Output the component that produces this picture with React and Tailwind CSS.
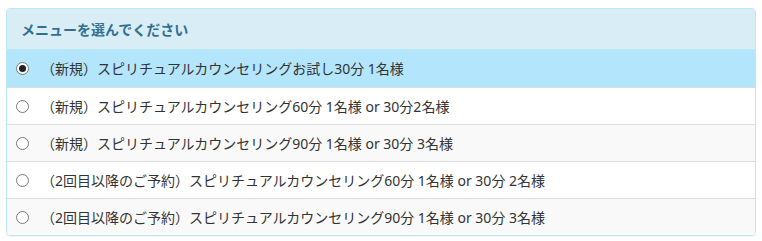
import React, { useState } from 'react';

const MENUS = [
  '（新規）スピリチュアルカウンセリングお試し30分 1名様',
  '（新規）スピリチュアルカウンセリング60分 1名様 or 30分2名様',
  '（新規）スピリチュアルカウンセリング90分 1名様 or 30分 3名様',
  '（2回目以降のご予約）スピリチュアルカウンセリング60分 1名様 or 30分 2名様',
  '（2回目以降のご予約）スピリチュアルカウンセリング90分 1名様 or 30分 3名様',
];

const Radio = ({ checked }) => (
  <span className="flex items-center justify-center w-[13px] h-[13px] rounded-full border border-[#7a7a7a] bg-white shrink-0">
    {checked && <span className="w-[7px] h-[7px] rounded-full bg-[#222]" />}
  </span>
);

export default function App() {
  const [selected, setSelected] = useState(0);

  return (
    <div className="bg-white w-[762px] h-[241px] pt-[8px] pl-[6px]" style={{ fontFamily: '"Noto Sans", "Noto Sans CJK JP", sans-serif' }}>
      <div className="w-[750px] rounded-[4px] border border-[#bce8f1] overflow-hidden shadow-[0_1px_1px_rgba(0,0,0,0.05)]">
        <div className="h-[41px] bg-[#d9edf7] border-b border-[#bce8f1] flex items-center pl-[14px] text-[14px] font-bold text-[#31708f]">
          メニューを選んでください
        </div>
        {MENUS.map((m, i) => {
          const active = i === selected;
          const bg = active ? 'bg-[#b3e5fc]' : i % 2 === 0 ? 'bg-[#f9f9f9]' : 'bg-white';
          return (
            <div
              key={i}
              onClick={() => setSelected(i)}
              className={`h-[37px] flex items-center pl-[9px] gap-[12px] text-[14px] text-[#333] cursor-pointer ${bg} ${i > 0 ? 'border-t border-[#ddd]' : ''}`}
            >
              <Radio checked={active} />
              <span>{m}</span>
            </div>
          );
        })}
      </div>
    </div>
  );
}
